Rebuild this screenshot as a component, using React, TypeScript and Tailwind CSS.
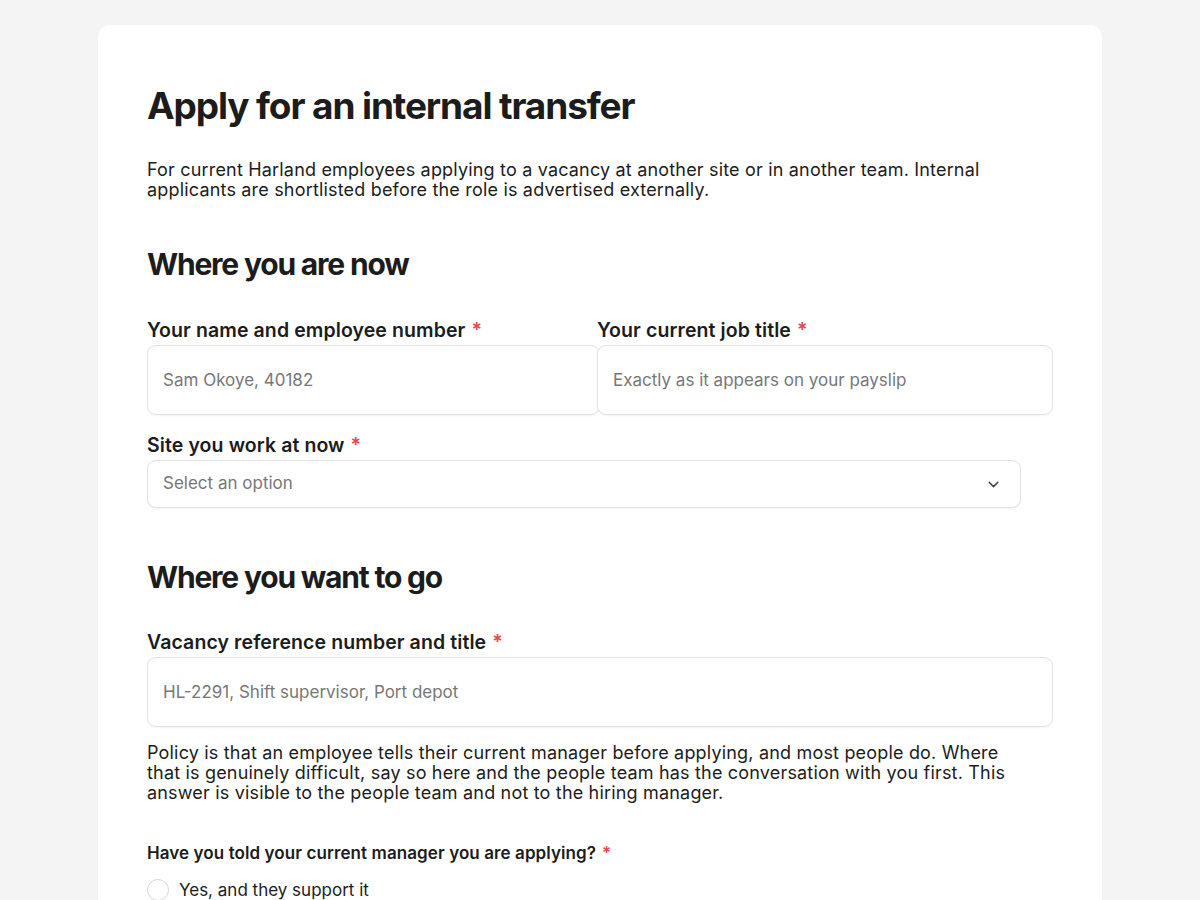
import { ChevronDown } from 'lucide-react'

function Req() {
  return <span className="ml-1.5 text-[#e5484d]">*</span>
}

function Label({ children }: { children: React.ReactNode }) {
  return (
    <label className="block text-[19.5px] font-semibold leading-[24px] tracking-[0.005em] text-[#1c1c1c]">
      {children}
      <Req />
    </label>
  )
}

function TextInput({ placeholder, className = '' }: { placeholder: string; className?: string }) {
  return (
    <input
      type="text"
      placeholder={placeholder}
      className={`mt-[3px] block h-[70px] rounded-[9px] border border-[#e2e2e2] bg-white px-[15px] text-[17px] text-[#1c1c1c] shadow-[0_1px_2px_rgba(0,0,0,0.05)] placeholder:text-[#777] focus:outline-none ${className}`}
    />
  )
}

export default function App() {
  return (
    <div className="min-h-[900px] bg-[#f4f4f4] pt-[25px] font-['Inter',sans-serif] text-[#1c1c1c]">
      <div className="mx-auto w-[1004px] rounded-[12px] bg-white px-[49px] pb-10 pt-[59px]">
        <h1 className="text-[37px] font-bold leading-[44px] tracking-[-0.03em]">Apply for an internal transfer</h1>
        <p className="mt-[32px] text-[18px] leading-[20px] tracking-[0.01em]">
          For current Harland employees applying to a vacancy at another site or in another team. Internal
          applicants are shortlisted before the role is advertised externally.
        </p>

        <h2 className="mt-[46px] text-[30px] font-bold leading-[36px] tracking-[-0.04em]">Where you are now</h2>

        <div className="mt-[36px] flex">
          <div className="w-[450px] shrink-0">
            <Label>Your name and employee number</Label>
            <TextInput placeholder="Sam Okoye, 40182" className="w-[453px]" />
          </div>
          <div className="relative flex-1">
            <Label>Your current job title</Label>
            <TextInput placeholder="Exactly as it appears on your payslip" className="relative w-full" />
          </div>
        </div>

        <div className="mt-[18px]">
          <Label>Site you work at now</Label>
          <div className="mt-[3px] flex h-[48px] w-[874px] items-center justify-between rounded-[9px] border border-[#e2e2e2] bg-white pl-[15px] pr-[18px] shadow-[0_1px_2px_rgba(0,0,0,0.05)]">
            <span className="text-[17px] text-[#777]">Select an option</span>
            <ChevronDown size={17} strokeWidth={2} className="text-[#444]" />
          </div>
        </div>

        <h2 className="mt-[51px] text-[30px] font-bold leading-[36px] tracking-[-0.04em]">Where you want to go</h2>

        <div className="mt-[35px]">
          <Label>Vacancy reference number and title</Label>
          <TextInput placeholder="HL-2291, Shift supervisor, Port depot" className="w-full" />
        </div>

        <p className="mt-[16px] max-w-[880px] text-[18px] leading-[20px] tracking-[0.01em]">
          Policy is that an employee tells their current manager before applying, and most people do. Where
          that is genuinely difficult, say so here and the people team has the conversation with you first. This
          answer is visible to the people team and not to the hiring manager.
        </p>

        <fieldset className="mt-[39px]">
          <legend className="text-[17px] font-semibold leading-[22px] tracking-[0.005em]">
            Have you told your current manager you are applying?
            <Req />
          </legend>
          <div className="mt-[15px] flex flex-col gap-3">
            {['Yes, and they support it', 'Yes, and they have concerns', 'Not yet'].map((o) => (
              <label key={o} className="flex items-center gap-[10px] text-[17px] leading-[22px]">
                <span className="h-[22px] w-[22px] shrink-0 rounded-full border border-[#d6d6d6] bg-white" />
                {o}
              </label>
            ))}
          </div>
        </fieldset>
      </div>
    </div>
  )
}
